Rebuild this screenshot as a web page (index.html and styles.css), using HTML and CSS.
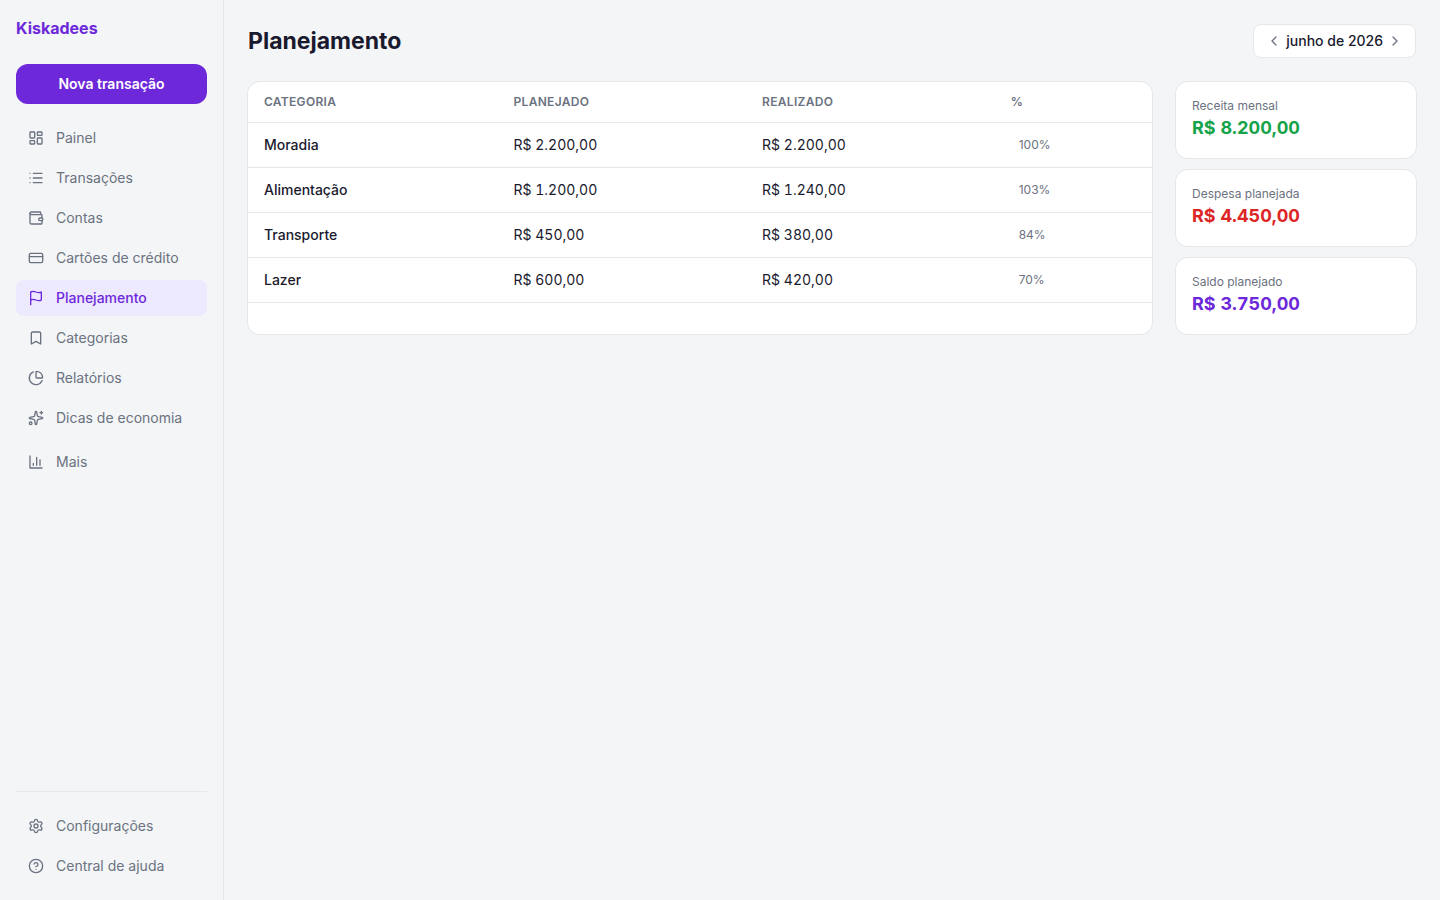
FILE: index.html
```html
<!DOCTYPE html>
<html lang="pt-BR">
<head>
    <meta charset="UTF-8">
    <meta name="viewport" content="width=device-width, initial-scale=1.0">
    <title>Kiskadees - Planejamento</title>
    <link rel="stylesheet" href="styles.css">
</head>
<body>
    <aside class="sidebar">
        <div class="logo">Kiskadees</div>
        <button type="button" class="btn-new">Nova transação</button>
        <nav class="menu">
            <a href="#" class="menu-item">
                <svg class="icon" viewBox="0 0 24 24"><rect x="3" y="3" width="7" height="9" rx="1"/><rect x="14" y="3" width="7" height="5" rx="1"/><rect x="14" y="12" width="7" height="9" rx="1"/><rect x="3" y="16" width="7" height="5" rx="1"/></svg>
                Painel
            </a>
            <a href="#" class="menu-item">
                <svg class="icon" viewBox="0 0 24 24"><path d="M3 5h.01M3 12h.01M3 19h.01M8 5h13M8 12h13M8 19h13"/></svg>
                Transações
            </a>
            <a href="#" class="menu-item">
                <svg class="icon" viewBox="0 0 24 24"><path d="M19 7V4a1 1 0 0 0-1-1H5a2 2 0 0 0 0 4h15a1 1 0 0 1 1 1v4h-3a2 2 0 0 0 0 4h3a1 1 0 0 0 1-1v-2a1 1 0 0 0-1-1"/><path d="M3 5v14a2 2 0 0 0 2 2h15a1 1 0 0 0 1-1v-4"/></svg>
                Contas
            </a>
            <a href="#" class="menu-item">
                <svg class="icon" viewBox="0 0 24 24"><rect x="2" y="5" width="20" height="14" rx="2"/><path d="M2 10h20"/></svg>
                Cartões de crédito
            </a>
            <a href="#" class="menu-item active" aria-current="page">
                <svg class="icon" viewBox="0 0 24 24"><path d="M4 15s1-1 4-1 5 2 8 2 4-1 4-1V3s-1 1-4 1-5-2-8-2-4 1-4 1z"/><path d="M4 22v-7"/></svg>
                Planejamento
            </a>
            <a href="#" class="menu-item">
                <svg class="icon" viewBox="0 0 24 24"><path d="m19 21-7-4-7 4V5a2 2 0 0 1 2-2h10a2 2 0 0 1 2 2v16z"/></svg>
                Categorias
            </a>
            <a href="#" class="menu-item">
                <svg class="icon" viewBox="0 0 24 24"><path d="M21 12c.552 0 1.005-.449.95-.998a10 10 0 0 0-8.953-8.951c-.55-.055-.998.398-.998.95v8a1 1 0 0 0 1 1z"/><path d="M21.21 15.89A10 10 0 1 1 8 2.83"/></svg>
                Relatórios
            </a>
            <a href="#" class="menu-item">
                <svg class="icon" viewBox="0 0 24 24"><path d="M11.017 2.814a1 1 0 0 1 1.966 0l1.051 5.558a2 2 0 0 0 1.594 1.594l5.558 1.051a1 1 0 0 1 0 1.966l-5.558 1.051a2 2 0 0 0-1.594 1.594l-1.051 5.558a1 1 0 0 1-1.966 0l-1.051-5.558a2 2 0 0 0-1.594-1.594l-5.558-1.051a1 1 0 0 1 0-1.966l5.558-1.051a2 2 0 0 0 1.594-1.594z"/><path d="M20 2v4M22 4h-4"/><circle cx="4" cy="20" r="2"/></svg>
                Dicas de economia
            </a>
            <button type="button" class="menu-item more">
                <svg class="icon" viewBox="0 0 24 24"><path d="M3 3v18h18M18 17V9M13 17V5M8 17v-3"/></svg>
                Mais
            </button>
        </nav>
        <nav class="menu menu-bottom">
            <a href="#" class="menu-item">
                <svg class="icon" viewBox="0 0 24 24"><path d="M9.671 4.136a2.34 2.34 0 0 1 4.659 0 2.34 2.34 0 0 0 3.319 1.915 2.34 2.34 0 0 1 2.33 4.033 2.34 2.34 0 0 0 0 3.831 2.34 2.34 0 0 1-2.33 4.033 2.34 2.34 0 0 0-3.319 1.915 2.34 2.34 0 0 1-4.659 0 2.34 2.34 0 0 0-3.32-1.915 2.34 2.34 0 0 1-2.33-4.033 2.34 2.34 0 0 0 0-3.831A2.34 2.34 0 0 1 6.35 6.051a2.34 2.34 0 0 0 3.319-1.915"/><circle cx="12" cy="12" r="3"/></svg>
                Configurações
            </a>
            <a href="#" class="menu-item">
                <svg class="icon" viewBox="0 0 24 24"><circle cx="12" cy="12" r="10"/><path d="M9.09 9a3 3 0 0 1 5.83 1c0 2-3 3-3 3M12 17h.01"/></svg>
                Central de ajuda
            </a>
        </nav>
    </aside>
    <main class="content">
        <header class="page-header">
            <h1>Planejamento</h1>
            <div class="month">
                <button type="button" aria-label="Mês anterior"><svg class="icon" viewBox="0 0 24 24"><path d="m15 18-6-6 6-6"/></svg></button>
                <span>junho de 2026</span>
                <button type="button" aria-label="Próximo mês"><svg class="icon" viewBox="0 0 24 24"><path d="m9 18 6-6-6-6"/></svg></button>
            </div>
        </header>
        <div class="plan">
            <section class="card">
                <table>
                    <thead>
                        <tr>
                            <th>Categoria</th>
                            <th>Planejado</th>
                            <th>Realizado</th>
                            <th class="col-pct">%</th>
                        </tr>
                    </thead>
                    <tbody>
                        <tr>
                            <td class="name">Moradia</td>
                            <td>R$ 2.200,00</td>
                            <td>R$ 2.200,00</td>
                            <td class="pct">100%</td>
                        </tr>
                        <tr>
                            <td class="name">Alimentação</td>
                            <td>R$ 1.200,00</td>
                            <td>R$ 1.240,00</td>
                            <td class="pct">103%</td>
                        </tr>
                        <tr>
                            <td class="name">Transporte</td>
                            <td>R$ 450,00</td>
                            <td>R$ 380,00</td>
                            <td class="pct">84%</td>
                        </tr>
                        <tr>
                            <td class="name">Lazer</td>
                            <td>R$ 600,00</td>
                            <td>R$ 420,00</td>
                            <td class="pct">70%</td>
                        </tr>
                    </tbody>
                </table>
            </section>
            <section class="summary">
                <div class="card total">
                    <div class="label">Receita mensal</div>
                    <div class="value green">R$ 8.200,00</div>
                </div>
                <div class="card total">
                    <div class="label">Despesa planejada</div>
                    <div class="value red">R$ 4.450,00</div>
                </div>
                <div class="card total">
                    <div class="label">Saldo planejado</div>
                    <div class="value purple">R$ 3.750,00</div>
                </div>
            </section>
        </div>
    </main>
</body>
</html>
```
FILE: styles.css
```css
* {
    box-sizing: border-box;
}
body {
    display: flex;
    min-height: 100vh;
    margin: 0;
    background-color: #f3f5f7;
    color: #1a1a2e;
    font-family: Inter, "Liberation Sans", sans-serif;
    font-size: 14px;
    line-height: 20px;
}
button {
    padding: 0;
    border: 0;
    background: none;
    color: inherit;
    font: inherit;
    cursor: pointer;
}
.icon {
    display: block;
    flex-shrink: 0;
    width: 16px;
    height: 16px;
    fill: none;
    stroke: currentColor;
    stroke-width: 2;
    stroke-linecap: round;
    stroke-linejoin: round;
}

/* sidebar */
.sidebar {
    display: flex;
    flex-direction: column;
    flex-shrink: 0;
    width: 224px;
    padding: 16px;
    border-right: 1px solid #e5e7eb;
}
.logo {
    margin-bottom: 24px;
    color: #6d28d9;
    font-size: 16px;
    font-weight: 700;
    line-height: 24px;
}
.btn-new {
    height: 40px;
    margin-bottom: 16px;
    border-radius: 12px;
    background-color: #6d28d9;
    color: #fff;
    font-weight: 600;
}
.menu {
    display: flex;
    flex-direction: column;
    gap: 4px;
}
.menu-item {
    display: flex;
    align-items: center;
    gap: 12px;
    padding: 8px 12px;
    border-radius: 8px;
    color: #6b7280;
    text-decoration: none;
}
.menu-item.active {
    background-color: #ede9fe;
    color: #6d28d9;
    font-weight: 500;
}
.menu-item.more {
    margin-top: 4px;
}
.menu-bottom {
    margin-top: auto;
    padding-top: 16px;
    border-top: 1px solid #e5e7eb;
}

/* content */
.content {
    flex: 1;
    min-width: 0;
    padding: 24px;
}
.page-header {
    display: flex;
    align-items: center;
    justify-content: space-between;
    margin-bottom: 24px;
}
h1 {
    margin: 0;
    font-size: 23px;
    font-weight: 700;
    line-height: 32px;
}
.month {
    display: flex;
    align-items: center;
    gap: 4px;
    padding: 6px 12px;
    border: 1px solid #e5e7eb;
    border-radius: 8px;
    background-color: #fff;
    font-weight: 500;
}
.month button {
    color: #6b7280;
}
.plan {
    display: grid;
    grid-template-columns: 1fr 240px;
    gap: 24px;
}
.card {
    overflow: hidden;
    border-radius: 12px;
    background-color: #fff;
    box-shadow: 0 0 0 1px #e5e7eb;
}
table {
    width: 100%;
    border-collapse: separate;
    border-spacing: 0;
    table-layout: fixed;
    font-variant-numeric: tabular-nums;
}
th,
td {
    padding: 12px 16px;
    border-bottom: 1px solid #e5e7eb;
    text-align: left;
}
th {
    width: 27.5%;
    color: #6b7280;
    font-size: 12px;
    font-weight: 600;
    line-height: 16px;
    letter-spacing: 0.025em;
    text-transform: uppercase;
}
th:first-child {
    width: 27.6%;
}
th.col-pct {
    width: auto;
}
.name {
    font-weight: 500;
}
.pct {
    padding-left: 24px;
    color: #6b7280;
    font-size: 12px;
    font-variant-numeric: normal;
}
.summary {
    display: flex;
    flex-direction: column;
    gap: 12px;
}
.total {
    padding: 16px;
}
.label {
    color: #6b7280;
    font-size: 12px;
    line-height: 16px;
}
.value {
    font-size: 18px;
    font-weight: 700;
    line-height: 28px;
    font-variant-numeric: tabular-nums;
}
.green {
    color: #16a34a;
}
.red {
    color: #dc2626;
}
.purple {
    color: #6d28d9;
}
```
